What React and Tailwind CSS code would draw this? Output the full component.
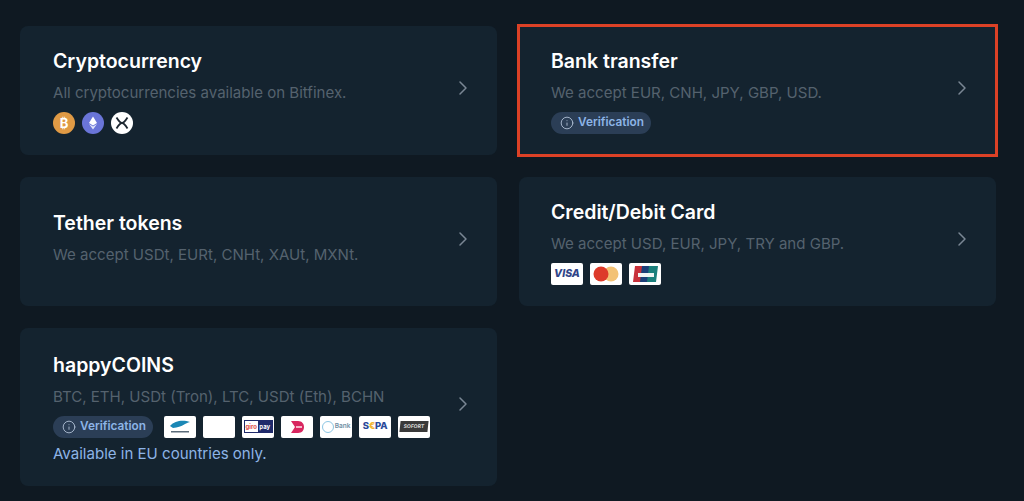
import React from 'react';
import { ChevronRight, Info } from 'lucide-react';

function CoinIcon({ bg, children }) {
    return (
        <div className={`w-[22px] h-[22px] rounded-full flex items-center justify-center ${bg}`}>
            <svg width="22" height="22" viewBox="0 0 22 22">{children}</svg>
        </div>
    );
}

function VerificationBadge() {
    return (
        <div className="h-[22px] w-[100px] rounded-full bg-[#2b3e56] flex items-center pl-[9px] gap-[4px] text-[#8db4e6] text-[11.8px] font-semibold shrink-0">
            <Info size={14} strokeWidth={1.5} className="text-[#b4c4d8]" />
            <span>Verification</span>
        </div>
    );
}

function PayLogo({ children, w = 'w-[32px]' }) {
    return (
        <div className={`${w} h-[22px] rounded-[2px] bg-white flex items-center justify-center overflow-hidden`}>
            {children}
        </div>
    );
}

function Card({ title, desc, children, outlined, left = 'pl-[33px]' }) {
    return (
        <div className={`relative bg-[#14232f] ${left} pr-[28px] pb-[6px] flex items-center justify-between ${outlined ? 'outline-[3px] outline-[#dc4126] outline-offset-[-1px]' : 'rounded-lg'}`}>
            <div className={`flex flex-col ${children ? '' : 'mb-[3px]'}`}>
                <div className="text-[19.5px] leading-[28px] font-semibold text-white">{title}</div>
                <div className="text-[15.05px] leading-[20px] mt-[8px] text-[#55626e]">{desc}</div>
                {children && <div className="mb-[-6px]">{children}</div>}
            </div>
            <ChevronRight size={24} strokeWidth={1.5} className="text-[#7a8794] mr-[-6px]" />
        </div>
    );
}

export default function App() {
    return (
        <div className="w-[1024px] h-[501px] overflow-hidden bg-[#0f1922] px-[20px] pt-[26px] font-['Inter',sans-serif]">
            <div className="grid grid-cols-[477px_477px] gap-x-[22px] gap-y-[22px] grid-rows-[129px_129px_158px]">
                <Card title="Cryptocurrency" desc="All cryptocurrencies available on Bitfinex.">
                    <div className="flex gap-[7px] mt-[9px]">
                        <CoinIcon bg="bg-[#e09a45]">
                            <text x="11" y="15.5" textAnchor="middle" fontSize="13" fontWeight="700" fill="#fff">₿</text>
                        </CoinIcon>
                        <CoinIcon bg="bg-[#6a75d8]">
                            <path d="M11 4.5 L15 11 L11 13.5 L7 11 Z" fill="#fff" />
                            <path d="M7 12 L11 14.5 L15 12 L11 17.5 Z" fill="#e3e6fa" />
                        </CoinIcon>
                        <CoinIcon bg="bg-white">
                            <path d="M5.5 5.5 C8 9.5 9.5 11 11 11 C12.5 11 14 9.5 16.5 5.5 M5.5 16.5 C8 12.5 9.5 11 11 11 C12.5 11 14 12.5 16.5 16.5" fill="none" stroke="#1c2630" strokeWidth="1.8" />
                        </CoinIcon>
                    </div>
                </Card>
                <Card title="Bank transfer" desc="We accept EUR, CNH, JPY, GBP, USD." outlined left="pl-[32px]">
                    <div className="mt-[9px]">
                        <VerificationBadge />
                    </div>
                </Card>
                <Card title="Tether tokens" desc="We accept USDt, EURt, CNHt, XAUt, MXNt." />
                <Card title="Credit/Debit Card" desc="We accept USD, EUR, JPY, TRY and GBP." left="pl-[32px]">
                    <div className="flex gap-[7px] mt-[9px]">
                        <PayLogo>
                            <span className="text-[10.5px] font-extrabold italic text-[#2f4488]">VISA</span>
                        </PayLogo>
                        <PayLogo>
                            <svg width="28" height="16" viewBox="0 0 28 16">
                                <circle cx="19" cy="8" r="7.5" fill="#f3c276" />
                                <circle cx="9" cy="8" r="7.5" fill="#dd3a2a" />
                            </svg>
                        </PayLogo>
                        <PayLogo>
                            <svg width="27" height="18" viewBox="0 0 27 18">
                                <path d="M3 1 H11 L9 17 H1 Z" fill="#c8313b" />
                                <path d="M10 1 H18 L16 17 H8 Z" fill="#1c3f78" />
                                <path d="M17 1 H26 L24 17 H15 Z" fill="#1b7f7c" />
                                <rect x="6" y="8" width="16" height="4" fill="#f1f4f4" />
                            </svg>
                        </PayLogo>
                    </div>
                </Card>
                <Card title="happyCOINS" desc="BTC, ETH, USDt (Tron), LTC, USDt (Eth), BCHN">
                    <div className="flex items-center gap-[11px] mt-[9px]">
                        <VerificationBadge />
                        <div className="flex gap-[7px]">
                            <PayLogo>
                                <svg width="28" height="16" viewBox="0 0 28 16">
                                    <path d="M4 7 C9 1 18 1 24 3 C19 4 17 8 7 9 Z" fill="#1b87b5" />
                                    <rect x="5" y="12" width="18" height="1.5" fill="#5a6b7a" />
                                </svg>
                            </PayLogo>
                            <PayLogo />
                            <PayLogo>
                                <div className="w-[29px] h-[13px] border border-[#1f2a6b] flex text-[6px] leading-[11px] font-bold text-center">
                                    <span className="w-1/2 text-[#e0493f]">giro</span>
                                    <span className="w-1/2 bg-[#1f2a6b] text-white">pay</span>
                                </div>
                            </PayLogo>
                            <PayLogo>
                                <svg width="16" height="14" viewBox="0 0 16 14">
                                    <path d="M2 1 H9 C13 1 15 4 15 7 C15 10 13 13 9 13 H2 L6 7 Z" fill="#d8265f" />
                                    <rect x="7" y="6" width="6" height="2" fill="#f6b6c9" />
                                </svg>
                            </PayLogo>
                            <PayLogo>
                                <div className="flex items-center gap-[1px] text-[6.5px] font-semibold text-[#6f8ea3]">
                                    <div className="w-[12px] h-[12px] rounded-full border border-[#8cc6e4]" />
                                    <span>Bank</span>
                                </div>
                            </PayLogo>
                            <PayLogo>
                                <span className="text-[9.5px] font-extrabold text-[#2b4a9b] tracking-[-0.2px]">S<span className="text-[#f2b632]">€</span>PA</span>
                            </PayLogo>
                            <PayLogo>
                                <div className="w-[28px] h-[11px] bg-[#3a3a3a] -skew-x-6 flex items-center justify-center text-[5px] font-bold text-[#dddddd]">
                                    SOFORT
                                </div>
                            </PayLogo>
                        </div>
                    </div>
                    <div className="text-[15.05px] leading-[20px] mt-[6px] text-[#8db4e6]">Available in EU countries only.</div>
                </Card>
            </div>
        </div>
    );
}
